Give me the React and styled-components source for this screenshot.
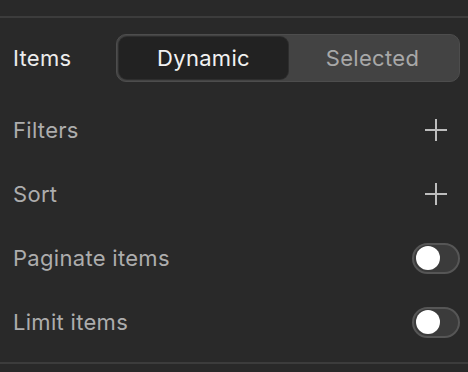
import React from "react";
import styled, { createGlobalStyle } from "styled-components";

const Global = createGlobalStyle`
  html, body { margin: 0; padding: 0; background: #292929; }
  body { font-family: Inter, "Noto Sans", sans-serif; -webkit-font-smoothing: antialiased; }
`;

const Panel = styled.div`
  width: 468px;
  height: 372px;
  background: #292929;
  box-sizing: border-box;
  padding-top: 16px;
  overflow: hidden;
`;

const Divider = styled.div`
  height: 2px;
  background: #3c3c3c;
`;

const Body = styled.div`
  display: flex;
  flex-direction: column;
  padding: 16px 8px 16px 13px;
`;

const Row = styled.div`
  display: flex;
  align-items: center;
  justify-content: space-between;
  height: 48px;
  margin-top: ${(p) => p.$gap || 0}px;
`;

const Label = styled.span`
  font-size: 22px;
  color: ${(p) => (p.$bright ? "#ececec" : "#adadad")};
  letter-spacing: 0.3px;
`;

const Segmented = styled.div`
  display: flex;
  width: 344px;
  height: 48px;
  box-sizing: border-box;
  padding: 2px;
  background: #434343;
  border: 1px solid #4d4d4d;
  border-radius: 10px;
`;

const Segment = styled.div`
  flex: 1;
  display: flex;
  align-items: center;
  justify-content: center;
  border-radius: 8px;
  font-size: 22px;
  letter-spacing: 0.3px;
  background: ${(p) => (p.$active ? "#222222" : "transparent")};
  color: ${(p) => (p.$active ? "#f2f2f2" : "#a8a8a8")};
  box-shadow: ${(p) => (p.$active ? "0 0 0 1px #2e2e2e" : "none")};
`;

const IconBtn = styled.div`
  width: 48px;
  height: 48px;
  display: flex;
  align-items: center;
  justify-content: center;
`;

const Toggle = styled.div`
  width: 48px;
  height: 31px;
  box-sizing: border-box;
  border-radius: 16px;
  background: #3b3b3b;
  border: 2px solid #565656;
  display: flex;
  align-items: center;
  padding-left: 2px;
`;

const Knob = styled.div`
  width: 24px;
  height: 24px;
  border-radius: 50%;
  background: #ffffff;
`;

const Plus = () => (
  <svg width="22" height="22" viewBox="0 0 22 22">
    <path d="M11 0V22M0 11H22" stroke="#bdbdbd" strokeWidth="2" />
  </svg>
);

export default function App() {
  return (
    <>
      <Global />
      <Panel>
        <Divider />
        <Body>
          <Row>
            <Label $bright>Items</Label>
            <Segmented>
              <Segment $active>Dynamic</Segment>
              <Segment>Selected</Segment>
            </Segmented>
          </Row>
          <Row $gap={24}>
            <Label>Filters</Label>
            <IconBtn><Plus /></IconBtn>
          </Row>
          <Row $gap={16}>
            <Label>Sort</Label>
            <IconBtn><Plus /></IconBtn>
          </Row>
          <Row $gap={16}>
            <Label>Paginate items</Label>
            <Toggle><Knob /></Toggle>
          </Row>
          <Row $gap={16}>
            <Label>Limit items</Label>
            <Toggle><Knob /></Toggle>
          </Row>
        </Body>
        <Divider />
      </Panel>
    </>
  );
}
